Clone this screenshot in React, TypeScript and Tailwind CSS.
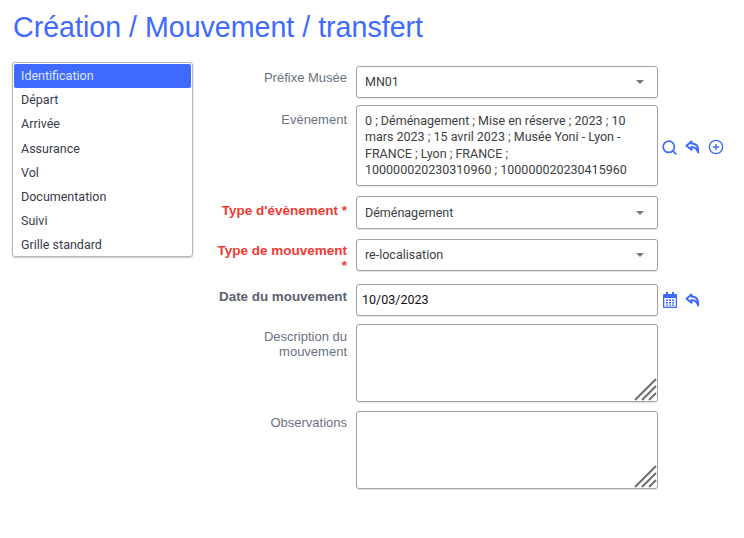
import { ReactNode } from 'react';
import { Search, CirclePlus } from 'lucide-react';

const MENU = ['Identification', 'Départ', 'Arrivée', 'Assurance', 'Vol', 'Documentation', 'Suivi', 'Grille standard'];

function ReplyIcon() {
  return (
    <svg width="16" height="16" viewBox="0 0 16 16" fill="none" stroke="#406aff" strokeWidth="2" strokeLinejoin="round" strokeLinecap="round">
      <path d="M6.500 2.500 1.500 6.800l5 4v-2.700c3.200 0 5.300 1 6.700 5.400.6-5.600-1.700-9-6.700-9z" />
    </svg>
  );
}

function CalendarIcon() {
  return (
    <svg width="14" height="16" viewBox="0 0 14 16" fill="#406aff">
      <path d="M3 0h2v2h4V0h2v2h2a1 1 0 0 1 1 1v12a1 1 0 0 1-1 1H1a1 1 0 0 1-1-1V3a1 1 0 0 1 1-1h2z" />
      <rect x="1.300" y="6" width="11.400" height="8.700" fill="#fff" />
      <path d="M3 7.500h2v1.500H3zM6 7.500h2v1.500H6zM9 7.500h2v1.500H9zM3 10h2v1.500H3zM6 10h2v1.500H6zM9 10h2v1.500H9zM3 12.400h2v1.400H3zM6 12.400h2v1.400H6zM9 12.400h2v1.400H9z" />
    </svg>
  );
}

function Row({ label, required, bold, className = '', children }: { label: ReactNode; required?: boolean; bold?: boolean; className?: string; children: ReactNode }) {
  const color = required
    ? 'text-[#ee3a33] font-bold text-[13.5px]'
    : bold
      ? 'text-[#5a6270] font-bold text-[13.4px]'
      : 'text-[#6b7280] text-[13px]';
  return (
    <div className={`flex ${className}`}>
      <div className={`w-[135px] mr-[9px] text-right leading-[15px] whitespace-nowrap font-['Liberation_Sans',sans-serif] ${color}`}>{label}</div>
      {children}
    </div>
  );
}

function SelectBox({ value, h = 'h-[32px]' }: { value: string; h?: string }) {
  return (
    <div className={`w-[302px] ${h} border border-[#a3a3a3] rounded-[3px] pl-[8px] pr-[13px] flex items-center justify-between text-[12.5px] text-[#3c4043] shadow-[0_1px_1px_rgba(0,0,0,0.12)]`}>
      <span>{value}</span>
      <span className="w-0 h-0 border-x-[4px] border-x-transparent border-t-[4px] border-t-[#7a7a7a]" />
    </div>
  );
}

function TextArea({ h }: { h: string }) {
  return (
    <div className={`relative w-[302px] ${h} border border-[#a3a3a3] rounded-[3px] shadow-[0_1px_1px_rgba(0,0,0,0.12)]`}>
      <svg className="absolute right-0 bottom-0" width="24" height="24" viewBox="0 0 24 24" stroke="#6e6e6e" strokeWidth="2">
        <path d="M2 23 23 2M9 23 23 9M16 23l7-7" />
      </svg>
    </div>
  );
}

export default function App() {
  return (
    <div className="w-[744px] h-[538px] bg-white overflow-hidden pl-[12px] pt-[10px] font-['Roboto',sans-serif]">
      <h1 className="text-[28.6px] leading-[34px] text-[#406aff] font-['Liberation_Sans',sans-serif] pl-px">Création / Mouvement / transfert</h1>
      <div className="flex mt-[18px]">
        <ul className="w-[181px] h-[195px] border border-[#b5b5b5] rounded-[3px] p-px shadow-[0_1px_2px_rgba(0,0,0,0.2)] text-[12.5px] text-[#3a3a4a]">
          {MENU.map((item, i) => (
            <li key={item} className={`h-[24px] pl-[7px] flex items-center rounded-[2px] ${i === 0 ? 'h-[23px] bg-[#406aff] text-[#dfe6ff]' : ''} ${i === 3 ? 'mt-px' : ''}`}>
              {item}
            </li>
          ))}
        </ul>
        <div className="ml-[19px] pt-[4px] flex flex-col">
          <Row label="Préfixe Musée" className="[&>div:first-child]:pt-[4px]">
            <SelectBox value="MN01" />
          </Row>
          <Row label="Evènement" className="mt-[7px] [&>div:first-child]:pt-[7px]">
            <div className="w-[302px] h-[81px] border border-[#a3a3a3] rounded-[3px] px-[8px] pt-[7px] text-[12.5px] leading-[16.25px] text-[#3c4043] shadow-[0_1px_1px_rgba(0,0,0,0.12)]">
              0 ; Déménagement ; Mise en réserve ; 2023 ; 10 mars 2023 ; 15 avril 2023 ; Musée Yoni - Lyon - FRANCE ; Lyon ; FRANCE ; <span className="whitespace-nowrap">100000020230310960 ; 100000020230415960</span>
            </div>
            <div className="ml-[3px] mt-[34px] flex gap-[7px] h-[17px] text-[#406aff]">
              <Search size={17} strokeWidth={2.4} />
              <ReplyIcon />
              <CirclePlus size={16} strokeWidth={2} />
            </div>
          </Row>
          <Row label="Type d'évènement *" required className="mt-[10px] [&>div:first-child]:pt-[7px]">
            <SelectBox value="Déménagement" h="h-[33px] pt-px" />
          </Row>
          <Row label={<>Type de mouvement<br />*</>} required className="mt-[10px] [&>div:first-child]:pt-[4px]">
            <SelectBox value="re-localisation" />
          </Row>
          <Row label="Date du mouvement" bold className="mt-[11px] [&>div:first-child]:pt-[5px]">
            <div className="w-[302px] h-[32px] border border-[#a3a3a3] rounded-[3px] pl-[5px] flex items-center text-[12.5px] text-[#111] shadow-[0_1px_1px_rgba(0,0,0,0.12)]">10/03/2023</div>
            <div className="ml-[5px] mt-[8px] flex gap-[8px] h-[16px]">
              <CalendarIcon />
              <ReplyIcon />
            </div>
          </Row>
          <Row label={<>Description du<br />mouvement</>} className="mt-[8px] [&>div:first-child]:pt-[5px]">
            <TextArea h="h-[78px]" />
          </Row>
          <Row label="Observations" className="mt-[9px] [&>div:first-child]:pt-[4px]">
            <TextArea h="h-[78px]" />
          </Row>
        </div>
      </div>
    </div>
  );
}
